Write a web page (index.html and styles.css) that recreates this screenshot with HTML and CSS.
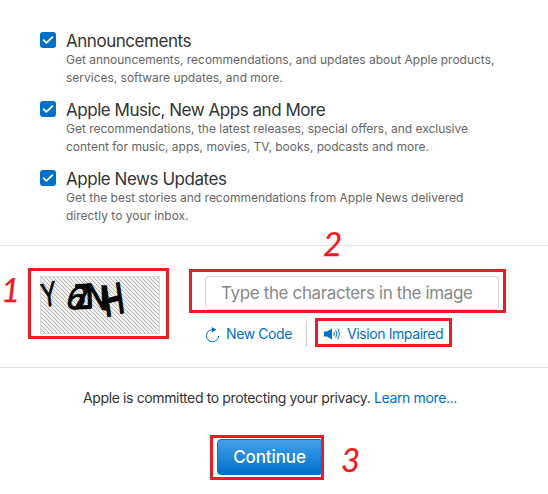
FILE: index.html
```html
<!DOCTYPE html>
<html lang="en">
<head>
<meta charset="utf-8">
<title>Apple ID</title>
<link rel="stylesheet" href="styles.css">
</head>
<body>
<main class="page">
  <section class="options">
    <div class="option">
      <span class="check"><svg viewBox="0 0 16 16"><path d="M3.6 8.1l2.8 2.8 6-5.7"/></svg></span>
      <div><h2>Announcements</h2><p>Get announcements, recommendations, and updates about Apple products,<br>services, software updates, and more.</p></div>
    </div>
    <div class="option">
      <span class="check"><svg viewBox="0 0 16 16"><path d="M3.6 8.1l2.8 2.8 6-5.7"/></svg></span>
      <div><h2>Apple Music, New Apps and More</h2><p>Get recommendations, the latest releases, special offers, and exclusive<br>content for music, apps, movies, TV, books, podcasts and more.</p></div>
    </div>
    <div class="option">
      <span class="check"><svg viewBox="0 0 16 16"><path d="M3.6 8.1l2.8 2.8 6-5.7"/></svg></span>
      <div><h2>Apple News Updates</h2><p>Get the best stories and recommendations from Apple News delivered<br>directly to your inbox.</p></div>
    </div>
  </section>
  <section class="verify">
    <svg class="captcha" viewBox="0 0 120 58">
      <defs><pattern id="hatch" width="4" height="4" patternUnits="userSpaceOnUse">
        <rect width="4" height="4" fill="#f0f0f0"/><path d="M-1 -1L5 5M-1 3L1 5M3 -1L5 1" stroke="#b5b5b5" stroke-width="1"/>
      </pattern></defs>
      <rect width="120" height="58" fill="url(#hatch)"/>
      <rect x=".5" y=".5" width="119" height="57" fill="none" stroke="#d9d9d9"/>
      <g class="glyphs">
        <text class="thin" transform="matrix(.78 -.2 .13 1.1 2.5 32)" font-size="29">Y</text>
        <text class="thin" transform="matrix(.95 0 -.25 .92 24 33)" font-size="34">6</text>
        <text class="mid" transform="matrix(.85 -.03 0 .98 34 33)" font-size="34">Z</text>
        <text class="bold" transform="matrix(.82 .12 .03 .9 46 31)" font-size="36">N</text>
        <text class="bold" transform="matrix(.8 -.2 .17 1.2 65.5 41)" font-size="34">H</text>
      </g>
    </svg>
    <div class="entry">
      <input type="text" placeholder="Type the characters in the image" aria-label="Type the characters in the image">
      <div class="links">
        <a class="new"><svg class="reload" viewBox="0 0 16 16"><path class="line" d="M7.5 2.6A6.1 6.1 0 1 0 13.6 9"/><path class="solid" d="M6.8 0L11.5 2.8 6.8 5.6z"/></svg><span>New Code</span></a>
        <a class="vision"><svg class="sound" viewBox="0 0 17 14"><path class="solid" d="M0 4.5h3L8 1.5v11L3 9.5H0z"/><path class="line" d="M9.8 5q1.3 2 0 4M11.7 3.4q2.3 3.6 0 7.2M13.6 1.8q3.4 5.2 0 10.4"/></svg><span>Vision Impaired</span></a>
      </div>
    </div>
  </section>
  <section class="footer">
    <p class="privacy"><span>Apple is committed to protecting your privacy.</span> <a>Learn more...</a></p>
    <button>Continue</button>
  </section>
  <div class="mark m1"></div><div class="mark m2"></div><div class="mark m3"></div><div class="mark m4"></div>
  <span class="num n1">1</span><span class="num n2">2</span><span class="num n3">3</span>
</main>
</body>
</html>
```
FILE: styles.css
```css
* { box-sizing: border-box; }
body { margin: 0; background: #fff; font-family: Inter, sans-serif; color: #333; }
h2, p { margin: 0; }
.page { position: relative; width: 548px; height: 494px; overflow: hidden; }
.options { height: 246px; padding: 30px 0 0 40px; border-bottom: 1px solid #e3e3e3; }
.option { display: flex; gap: 10px; height: 69px; }
.check { width: 16px; height: 16px; margin-top: 2px; border-radius: 3px; background: #0070c9; }
.check svg { display: block; fill: none; stroke: #fff; stroke-width: 1.8; stroke-linecap: round; stroke-linejoin: round; }
h2 { padding-top: 1px; margin-top: -.5px; font-size: 17px; line-height: 20px; font-weight: 400; letter-spacing: -.46px; white-space: nowrap; }
.option p { margin-top: .5px; font-size: 12px; line-height: 18px; color: #666; letter-spacing: -.01px; white-space: nowrap; }
.verify { display: flex; gap: 45px; height: 122px; padding: 30px 0 0 40px; border-bottom: 1px solid #e3e3e3; }
.captcha { width: 120px; height: 58px; }
.glyphs { font-family: Inter, sans-serif; fill: #050505; stroke: #050505; }
.thin { stroke-width: .7; }
.mid { stroke-width: 1.3; }
.bold { stroke-width: 1.6; }
input { display: block; width: 294px; height: 34px; padding: 0 15px; border: 1px solid #d6d6d6; border-radius: 4px; font: 17px Inter, sans-serif; letter-spacing: -.37px; }
input::placeholder { color: #888; opacity: 1; }
.links { display: flex; height: 25px; margin-top: 12px; font-size: 14px; letter-spacing: -.4px; color: #0070c9; }
.links a { display: flex; align-items: center; }
.links span { position: relative; top: -1px; white-space: nowrap; }
.new { width: 102px; border-right: 1px solid #ccc; }
.reload { width: 16px; height: 16px; margin-right: 5px; }
.vision { padding-left: 17px; }
.sound { width: 17px; height: 14px; margin: -2px 6px 0 0; }
.solid { fill: #0070c9; }
.line { fill: none; stroke: #0070c9; stroke-width: 1; }
.footer { padding-top: 20px; }
.privacy { padding-left: 83px; font-size: 14px; line-height: 19px; letter-spacing: -.37px; white-space: nowrap; }
.privacy a { color: #0070c9; }
button { display: block; width: 106px; height: 36px; margin: 32px 0 0 217px; padding: 0 1px 0 0; border: 1px solid #1271be; border-radius: 4px; background: linear-gradient(#42a1ec, #0070c9); color: #fff; font: 500 17px Inter, sans-serif; letter-spacing: -.1px; }
.mark { position: absolute; border: 3px solid #ed1c24; pointer-events: none; }
.m1 { left: 28px; top: 268px; width: 141px; height: 71px; }
.m2 { left: 189px; top: 269px; width: 317px; height: 44px; }
.m3 { left: 315px; top: 318px; width: 137px; height: 29px; }
.m4 { left: 210px; top: 435px; width: 114px; height: 45px; }
.num { position: absolute; color: #ed1c24; font: italic 33px/40px Lato, sans-serif; -webkit-text-stroke: .25px #ed1c24; }
.n1 { left: 1px; top: 269px; }
.n2 { left: 323px; top: 223px; }
.n3 { left: 341px; top: 439px; }
```
